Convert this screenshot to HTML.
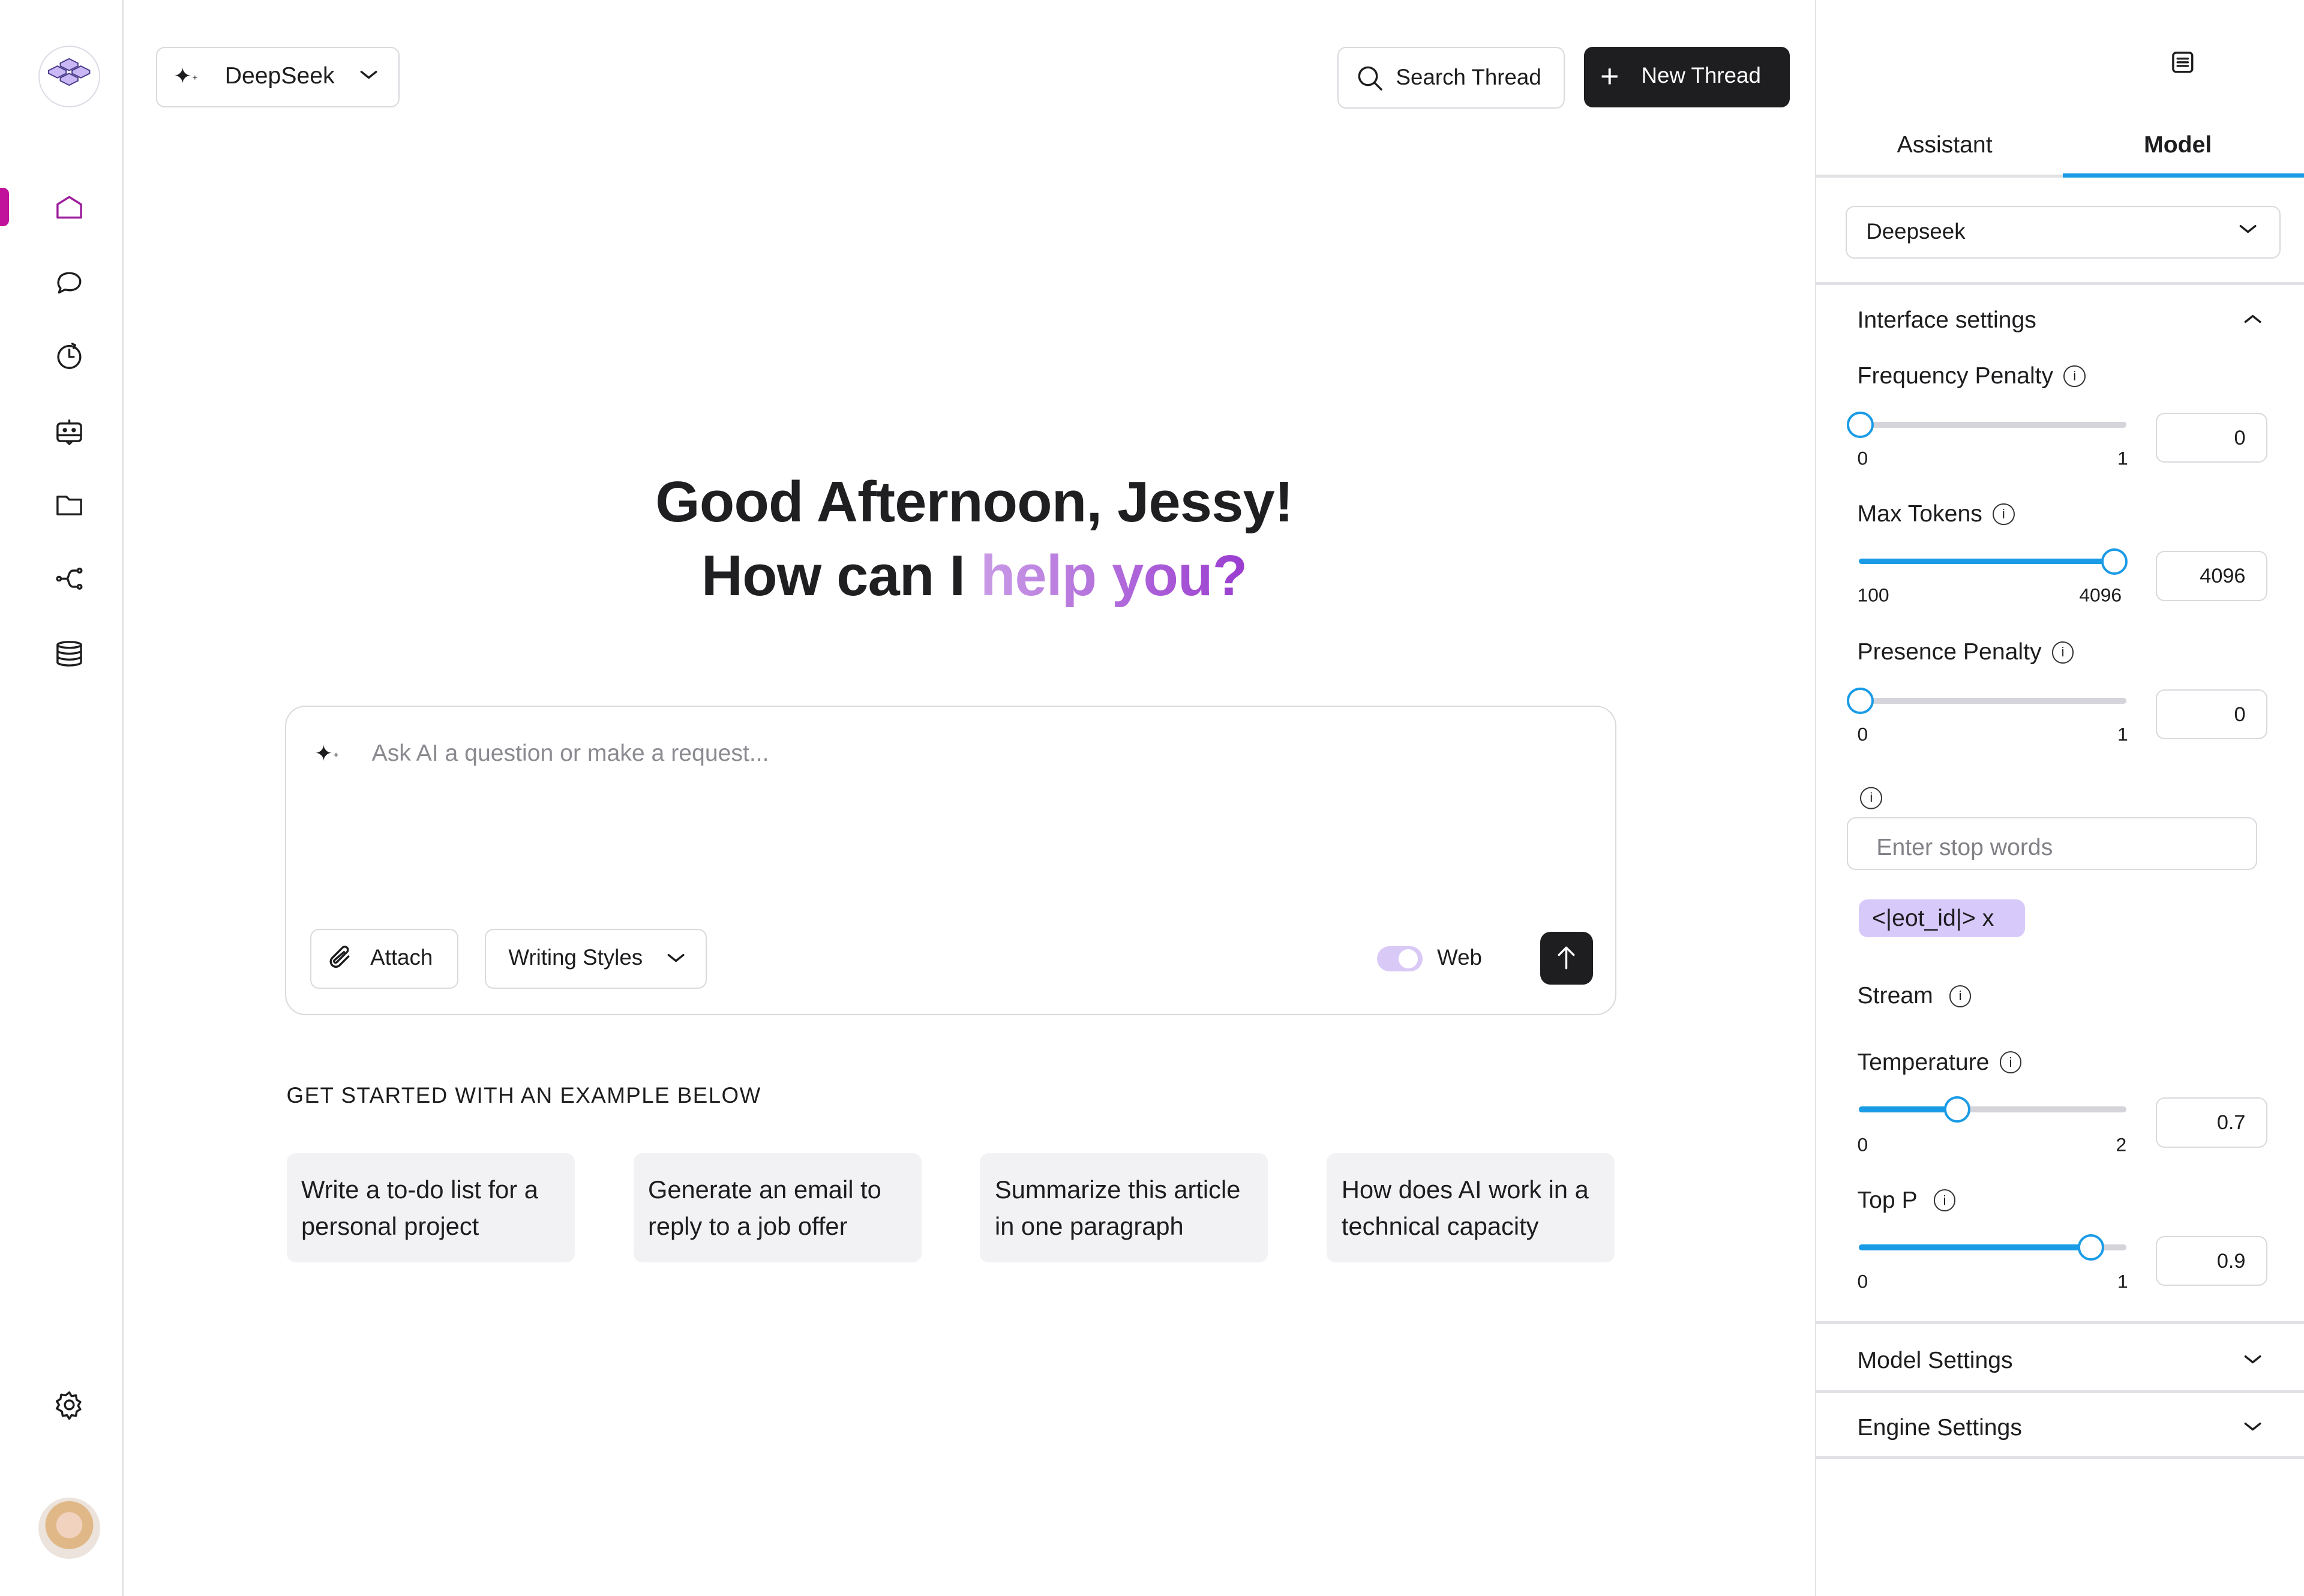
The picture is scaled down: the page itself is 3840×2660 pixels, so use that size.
<!DOCTYPE html>
<html><head><meta charset="utf-8"><style>
html,body{margin:0;padding:0;background:#fff;overflow:hidden}
#root{zoom:2.449;width:1568px;height:1086px;position:relative;font-family:"Liberation Sans",sans-serif;color:#1d1d1f}
.a{position:absolute}
.ic{position:absolute;width:20px;height:20px;fill:none;stroke:#1d1d1f;stroke-width:1.4;stroke-linecap:round;stroke-linejoin:round}
.box{position:absolute;border:1px solid #d9d9de;border-radius:6px;box-sizing:border-box;background:#fff}
.lbl{position:absolute;left:1264px;font-size:16px;transform:translateY(-50%);display:flex;align-items:center;gap:7px;margin-top:1px}
.info{width:15px;height:15px;border:1.2px solid #333;border-radius:50%;box-sizing:border-box;font-size:9px;display:inline-flex;align-items:center;justify-content:center}
.track{position:absolute;left:1265px;width:182px;height:4px;border-radius:2px;background:#d4d4da}
.fill{position:absolute;left:1265px;height:4px;border-radius:2px;background:#1a9be6}
.thumb{position:absolute;width:18px;height:18px;border:2px solid #1a9be6;border-radius:50%;background:#fff;box-sizing:border-box;transform:translate(-50%,-50%)}
.sm{position:absolute;font-size:13px;transform:translateY(-50%);margin-top:1px}
.inp{position:absolute;left:1467px;width:76px;height:34px;border:1px solid #d9d9de;border-radius:6px;box-sizing:border-box;font-size:14px;text-align:right;padding-right:14px;line-height:33px}
.hr{position:absolute;left:1236px;width:332px;height:2px;background:#e1e1e5}
.card{position:absolute;top:785px;width:196px;height:74px;background:#f2f2f4;border-radius:6px;box-sizing:border-box;padding:12px 10px;font-size:17px;line-height:25px}
</style></head><body><div id="root">
<div class="a" style="left:83px;top:0;width:1px;height:1086px;background:#e3e3e6"></div>
<div class="a" style="left:26px;top:31px;width:42px;height:42px;border:1px solid #dcdce6;border-radius:50%;box-sizing:border-box"></div>
<svg class="a" style="left:31px;top:38px" width="32" height="28" viewBox="0 0 32 28"><g fill="#c9b8f5" stroke="#4a3a8a" stroke-width=".8"><path d="M16 2l6 3v2l-6 3-6-3V5z"/><path d="M8 7l6 3v2l-6 3-6-3v-2z"/><path d="M24 7l6 3v2l-6 3-6-3v-2z"/><path d="M16 12l6 3v2l-6 3-6-3v-2z"/></g></svg>
<div class="a" style="left:0;top:128px;width:6px;height:26px;background:#c0129a;border-radius:0 4px 4px 0"></div>
<svg class="ic" style="left:37px;top:131px;stroke:#9c1c9c" viewBox="0 0 20 20"><path d="M2 17V8l8-5 8 5v9z"/></svg>
<svg class="ic" style="left:37px;top:182px" viewBox="0 0 20 20"><path d="M3 17l1-3C2 12 2 9 4 6c3-3 9-3 12 0 3 3 1 8-3 9-3 1-5 0-6 0z"/></svg>
<svg class="ic" style="left:37px;top:232px" viewBox="0 0 20 20"><circle cx="10" cy="11" r="7.5"/><path d="M10 6v5h3M12 2l2 1-1 2"/></svg>
<svg class="ic" style="left:37px;top:284px" viewBox="0 0 20 20"><rect x="2" y="4" width="16" height="12" rx="2"/><path d="M10 2v2M2 12h16M8 16l2 2 2-2"/><circle cx="7" cy="8.5" r=".8" fill="#1d1d1f"/><circle cx="13" cy="8.5" r=".8" fill="#1d1d1f"/></svg>
<svg class="ic" style="left:37px;top:334px" viewBox="0 0 20 20"><path d="M2 4h6l2 2h8v10H2z"/></svg>
<svg class="ic" style="left:37px;top:384px" viewBox="0 0 20 20"><circle cx="3" cy="10" r="1.3"/><circle cx="17" cy="4.5" r="1.3"/><circle cx="17" cy="15.5" r="1.3"/><path d="M4.5 10h4M15.5 4.5h-3c-3 0-3 5.5-4 5.5 1 0 1 5.5 4 5.5h3"/></svg>
<svg class="ic" style="left:37px;top:435px" viewBox="0 0 20 20"><ellipse cx="10" cy="4" rx="8" ry="2"/><path d="M2 4v12c0 1 4 2 8 2s8-1 8-2V4M2 8c0 1 4 2 8 2s8-1 8-2M2 12c0 1 4 2 8 2s8-1 8-2"/></svg>
<svg class="ic" style="left:37px;top:946px" viewBox="0 0 20 20"><circle cx="10" cy="10" r="3"/><path d="M10 1.5l1.5 2.5 3-.5.5 3 2.5 1.5-1.5 2.5 1.5 2.5-2.5 1.5-.5 3-3-.5-1.5 2.5-1.5-2.5-3 .5-.5-3L1.5 12.5 3 10 1.5 7.5 4 6l.5-3 3 .5z"/></svg>
<div class="a" style="left:26px;top:1019px;width:42px;height:42px;border-radius:50%;background:radial-gradient(circle at 50% 45%,#f1d2bf 0 28%,#e0b888 29% 52%,#ece4dc 53%)"></div>
<div class="box" style="left:106px;top:32px;width:166px;height:41px"></div>
<div class="a" style="left:118px;top:43px;font-size:15px">✦<span style="font-size:8px">⁺</span></div>
<div class="a" style="left:153px;top:43px;font-size:16px">DeepSeek</div>
<svg class="ic" style="left:243px;top:43px;width:16px;height:16px" viewBox="0 0 16 16"><path d="M3 6l5 4 5-4"/></svg>
<div class="box" style="left:910px;top:32px;width:155px;height:42px"></div>
<svg class="ic" style="left:922px;top:43px;width:20px" viewBox="0 0 20 20"><circle cx="9" cy="9" r="6"/><path d="M13.5 13.5L18 18"/></svg>
<div class="a" style="left:950px;top:44px;font-size:15px">Search Thread</div>
<div class="a" style="left:1078px;top:32px;width:140px;height:41px;background:#1e1e20;border-radius:6px"></div>
<div class="a" style="left:1089px;top:39px;font-size:22px;color:#fff;font-weight:300">+</div>
<div class="a" style="left:1117px;top:43px;font-size:15px;color:#fff">New Thread</div>
<div class="a" style="left:300px;width:726px;top:317px;text-align:center;font-size:39px;letter-spacing:-0.3px;font-weight:bold;line-height:50px;color:#1f1f22">Good Afternoon, Jessy!<br>How can I <span style="background:linear-gradient(90deg,#c99be6,#9a3cd0);-webkit-background-clip:text;color:transparent">help you?</span></div>
<div class="a" style="left:194px;top:480px;width:906px;height:211px;border:1px solid #dadade;border-radius:14px;box-sizing:border-box"></div>
<div class="a" style="left:214px;top:504px;font-size:15px">✦<span style="font-size:8px">⁺</span></div>
<div class="a" style="left:253px;top:504px;font-size:16px;color:#8a8a90">Ask AI a question or make a request...</div>
<div class="box" style="left:211px;top:632px;width:101px;height:41px"></div>
<svg class="ic" style="left:222px;top:642px" viewBox="0 0 20 20"><path d="M15 9l-6 6a3 3 0 01-5-5l7-7a2 2 0 013 3l-7 7a1 1 0 01-1.5-1.5L12 6"/></svg>
<div class="a" style="left:252px;top:643px;font-size:15px">Attach</div>
<div class="box" style="left:330px;top:632px;width:151px;height:41px"></div>
<div class="a" style="left:346px;top:643px;font-size:15px">Writing Styles</div>
<svg class="ic" style="left:452px;top:644px;width:16px;height:16px" viewBox="0 0 16 16"><path d="M3 6l5 4 5-4"/></svg>
<div class="a" style="left:937px;top:644px;width:31px;height:17px;background:#d9c9f6;border-radius:9px"></div>
<div class="a" style="left:952px;top:646px;width:13px;height:13px;background:#fff;border-radius:50%"></div>
<div class="a" style="left:978px;top:643px;font-size:15px">Web</div>
<div class="a" style="left:1048px;top:634px;width:36px;height:36px;background:#1e1e20;border-radius:7px"></div>
<svg class="ic" style="left:1056px;top:642px;stroke:#fff" viewBox="0 0 20 20"><path d="M10 17V3M5 8l5-5 5 5"/></svg>
<div class="a" style="left:195px;top:737px;font-size:15px;letter-spacing:.6px">GET STARTED WITH AN EXAMPLE BELOW</div>
<div class="card" style="left:195px">Write a to-do list for a personal project</div>
<div class="card" style="left:431px">Generate an email to reply to a job offer</div>
<div class="card" style="left:667px">Summarize this article in one paragraph</div>
<div class="card" style="left:903px">How does AI work in a technical capacity</div>
<div class="a" style="left:1235px;top:0;width:1px;height:1086px;background:#e3e3e6"></div>
<svg class="ic" style="left:1477px;top:34px;width:17px;height:17px" viewBox="0 0 17 17"><rect x="2" y="2" width="13" height="13" rx="2"/><path d="M5 6h7M5 8.5h7M5 11h7"/></svg>
<div class="a" style="left:1291px;top:90px;font-size:16px">Assistant</div>
<div class="a" style="left:1459px;top:90px;font-size:16px;font-weight:bold">Model</div>
<div class="a" style="left:1236px;top:119px;width:332px;height:2px;background:#e1e1e5"></div>
<div class="a" style="left:1404px;top:118px;width:164px;height:3px;background:#1a9be6"></div>
<div class="box" style="left:1256px;top:140px;width:296px;height:36px"></div>
<div class="a" style="left:1270px;top:149px;font-size:15px">Deepseek</div>
<svg class="ic" style="left:1522px;top:148px;width:16px;height:16px" viewBox="0 0 16 16"><path d="M3 6l5 4 5-4"/></svg>
<div class="hr" style="top:192px"></div>
<div class="lbl" style="top:217px">Interface settings</div>
<svg class="ic" style="left:1525px;top:209px;width:16px;height:16px" viewBox="0 0 16 16"><path d="M3 10l5-4 5 4"/></svg>
<div class="lbl" style="top:255px">Frequency Penalty <span class="info">i</span></div>
<div class="track" style="top:287px"></div><div class="thumb" style="left:1266px;top:289px"></div>
<div class="sm" style="left:1264px;top:311px">0</div><div class="sm" style="left:1441px;top:311px">1</div>
<div class="inp" style="top:281px">0</div>
<div class="lbl" style="top:349px">Max Tokens <span class="info">i</span></div>
<div class="fill" style="top:380px;width:174px"></div><div class="thumb" style="left:1439px;top:382px"></div>
<div class="sm" style="left:1264px;top:404px">100</div><div class="sm" style="left:1415px;top:404px">4096</div>
<div class="inp" style="top:375px">4096</div>
<div class="lbl" style="top:443px">Presence Penalty <span class="info">i</span></div>
<div class="track" style="top:475px"></div><div class="thumb" style="left:1266px;top:477px"></div>
<div class="sm" style="left:1264px;top:499px">0</div><div class="sm" style="left:1441px;top:499px">1</div>
<div class="inp" style="top:469px">0</div>
<div class="lbl" style="top:542px;left:1266px"><span class="info">i</span></div>
<div class="box" style="left:1257px;top:556px;width:279px;height:36px"></div>
<div class="a" style="left:1277px;top:568px;font-size:16px;color:#808086">Enter stop words</div>
<div class="a" style="left:1265px;top:612px;width:113px;height:26px;background:#d8c9fb;border-radius:6px;font-size:16px;line-height:26px;padding-left:9px;box-sizing:border-box">&lt;|eot_id|&gt; x</div>
<div class="lbl" style="top:677px">Stream <span class="info" style="margin-left:4px">i</span></div>
<div class="lbl" style="top:722px">Temperature <span class="info">i</span></div>
<div class="track" style="top:753px"></div><div class="fill" style="top:753px;width:67px"></div><div class="thumb" style="left:1332px;top:755px"></div>
<div class="sm" style="left:1264px;top:778px">0</div><div class="sm" style="left:1440px;top:778px">2</div>
<div class="inp" style="top:747px">0.7</div>
<div class="lbl" style="top:816px">Top P <span class="info" style="margin-left:4px">i</span></div>
<div class="track" style="top:847px"></div><div class="fill" style="top:847px;width:158px"></div><div class="thumb" style="left:1423px;top:849px"></div>
<div class="sm" style="left:1264px;top:871px">0</div><div class="sm" style="left:1441px;top:871px">1</div>
<div class="inp" style="top:841px">0.9</div>
<div class="hr" style="top:899px"></div>
<div class="lbl" style="top:925px">Model Settings</div>
<svg class="ic" style="left:1525px;top:917px;width:16px;height:16px" viewBox="0 0 16 16"><path d="M3 6l5 4 5-4"/></svg>
<div class="hr" style="top:946px"></div>
<div class="lbl" style="top:971px">Engine Settings</div>
<svg class="ic" style="left:1525px;top:963px;width:16px;height:16px" viewBox="0 0 16 16"><path d="M3 6l5 4 5-4"/></svg>
<div class="hr" style="top:991px"></div>
</div></body></html>
